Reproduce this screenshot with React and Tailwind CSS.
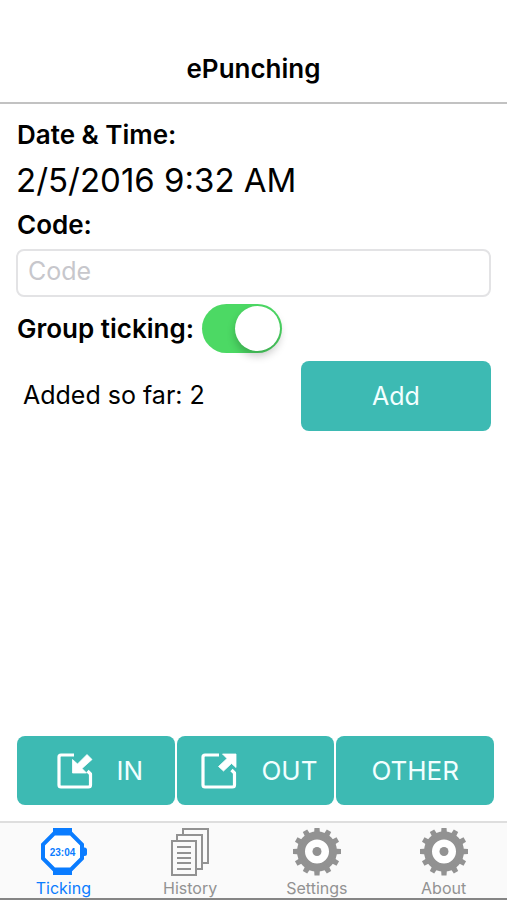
import React, { useState } from "react";

const TOOTH_ANGLES = [0, 30, 60, 90, 120, 150, 180, 210, 240, 270, 300, 330];

function InIcon() {
  return (
    <svg className="size-9 shrink-0" viewBox="0 0 36 36" fill="none" aria-hidden="true">
      <path d="M17 2H4Q2 2 2 4V32Q2 34 4 34H31.5Q33.5 34 33.5 32V21L30.5 18" stroke="white" strokeWidth="3.2" strokeLinejoin="round" />
      <path d="M30 1.5L35 6.5L25 15.5L29.5 20H15.5V6.5L20.5 11Z" fill="white" stroke="white" strokeWidth="0.8" strokeLinejoin="round" />
    </svg>
  );
}

function OutIcon() {
  return (
    <svg className="size-9 shrink-0" viewBox="0 0 36 36" fill="none" aria-hidden="true">
      <path d="M18 2H4Q2 2 2 4V32Q2 34 4 34H31.5Q33.5 34 33.5 32V20L30.5 17" stroke="white" strokeWidth="3.2" strokeLinejoin="round" />
      <path d="M21.5 1H35V14.5L30.5 10.5L22.5 18L17.5 13.5L26 5.5Z" fill="white" stroke="white" strokeWidth="0.8" strokeLinejoin="round" />
    </svg>
  );
}

function WatchIcon() {
  return (
    <svg className="size-12 shrink-0" viewBox="0 0 48 48" fill="none" aria-hidden="true">
      <path d="M14 0H33V5H14ZM14 42H33V47H14Z" fill="currentColor" />
      <path d="M15 5.5H32L43 16.5V30.5L32 41.5H15L4 30.5V16.5Z" fill="white" stroke="currentColor" strokeWidth="4" />
      <path d="M44 19.5H45.5Q48 19.5 48 22V25.5Q48 28 45.5 28H44Z" fill="currentColor" />
      <text
        x="23.5"
        y="27.5"
        textAnchor="middle"
        fill="currentColor"
        className="font-['Liberation_Sans',sans-serif] text-[10px] font-bold"
      >
        23:04
      </text>
    </svg>
  );
}

function PagesIcon() {
  return (
    <svg className="size-12 shrink-0" viewBox="0 0 48 48" fill="none" stroke="currentColor" strokeWidth="2" aria-hidden="true">
      <path d="M17 6V1H42V35H37" />
      <path d="M11 12V7H36V41H31" />
      <path d="M6 13H30V47H6Z" />
      <path d="M11 19H25M11 25H25M11 30H25M11 35H25M11 41H25" />
    </svg>
  );
}

function GearIcon() {
  return (
    <svg className="size-12 shrink-0" viewBox="0 0 48 48" fill="none" aria-hidden="true">
      <circle cx="24" cy="23.5" r="16" fill="white" stroke="currentColor" strokeWidth="8" />
      {TOOTH_ANGLES.map((angle) => (
        <path key={angle} d="M21 7L21.5 -0.5H26.5L27 7Z" fill="currentColor" transform={`rotate(${angle} 24 23.5)`} />
      ))}
      <circle cx="24" cy="23.5" r="4.5" fill="currentColor" />
    </svg>
  );
}

const TABS = [
  { label: "Ticking", Icon: WatchIcon, active: true },
  { label: "History", Icon: PagesIcon },
  { label: "Settings", Icon: GearIcon },
  { label: "About", Icon: GearIcon },
];

const ACTION =
  "flex h-[69px] items-center justify-center rounded-lg bg-[#3dbab3] text-[26px] text-[#f2ffff]";

export default function App() {
  const [grouped, setGrouped] = useState(true);

  return (
    <div className="flex min-h-screen flex-col bg-white font-[Inter,'Liberation_Sans',sans-serif] text-black">
      <header className="flex h-[104px] items-end justify-center border-b-2 border-[#c2c2c2] pb-[15px]">
        <h1 className="text-[26px] leading-9 font-semibold">ePunching</h1>
      </header>

      <main className="flex flex-1 flex-col px-4">
        <h2 className="pt-[13px] pl-px text-[26px] leading-9 font-semibold">Date &amp; Time:</h2>
        <p className="text-[33px] leading-[54px]">2/5/2016 9:32 AM</p>
        <label htmlFor="code" className="pl-px text-[26px] leading-9 font-semibold">
          Code:
        </label>
        <input
          id="code"
          type="text"
          placeholder="Code"
          className="mt-1.5 h-12 w-full rounded-lg border-2 border-[#e3e3e5] px-2.5 pb-1 text-[25px] placeholder:text-[#c7c7cc]"
        />

        <div className="mt-[7px] flex h-[49px] items-center gap-2 pl-px">
          <label htmlFor="group" className="text-[26px] font-semibold">
            Group ticking:
          </label>
          <input
            id="group"
            type="checkbox"
            role="switch"
            checked={grouped}
            onChange={(e) => setGrouped(e.target.checked)}
            className="flex h-[49px] w-20 shrink-0 appearance-none items-center rounded-full bg-[#e5e5ea] px-0.5 before:size-[45px] before:rounded-full before:bg-white before:shadow-[0_5px_8px_rgba(0,0,0,0.22)] checked:justify-end checked:bg-[#4cd964]"
          />
        </div>

        <div className="mt-2 flex items-center justify-between">
          <p className="pl-[7px] text-[25px]">Added so far: 2</p>
          <button type="button" className="h-[70px] w-2/5 rounded-lg bg-[#3dbab3] pt-0.5 text-[25px] text-[#f2ffff]">
            Add
          </button>
        </div>
      </main>

      <div className="mb-4 grid grid-cols-3 gap-0.5 pr-[13px] pl-[17px]">
        <button type="button" className={`${ACTION} gap-6 pl-2`}>
          <InIcon />
          IN
        </button>
        <button type="button" className={`${ACTION} gap-6 pl-2`}>
          <OutIcon />
          OUT
        </button>
        <button type="button" className={ACTION}>
          OTHER
        </button>
      </div>

      <nav className="flex h-[79px] border-t-2 border-b-2 border-t-[#dedede] border-b-[#858585] bg-[#fafafa]">
        {TABS.map(({ label, Icon, active }) => (
          <a
            key={label}
            href={`#${label.toLowerCase()}`}
            aria-current={active ? "page" : undefined}
            className={`flex flex-1 flex-col items-center pt-[5px] ${active ? "text-[#0a7cff]" : "text-[#929292]"}`}
          >
            <Icon />
            <span className="text-base leading-6">{label}</span>
          </a>
        ))}
      </nav>
    </div>
  );
}
